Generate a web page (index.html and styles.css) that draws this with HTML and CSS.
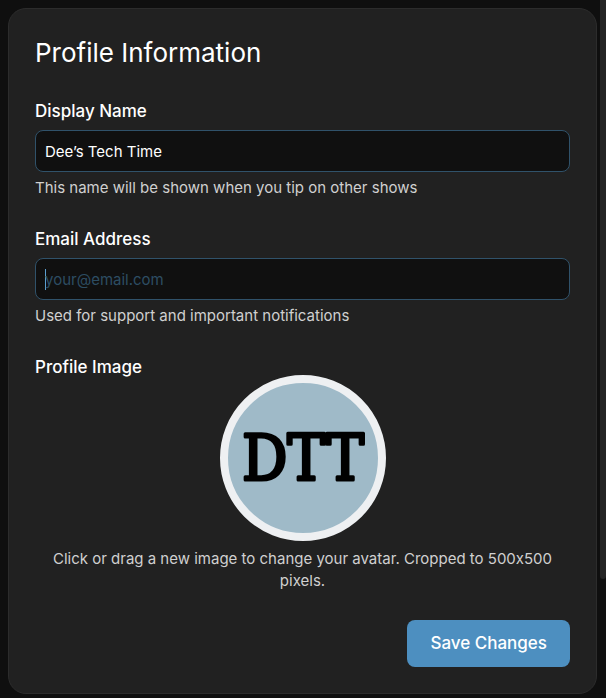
FILE: index.html
```html
<!DOCTYPE html>
<html lang="en">
<head>
<meta charset="utf-8">
<meta name="viewport" content="width=device-width, initial-scale=1">
<title>Profile Information</title>
<link rel="stylesheet" href="styles.css">
</head>
<body>

<main class="page">
  <form class="card">
    <h1 class="card-title">Profile Information</h1>

    <div class="field">
      <label class="field-label" for="displayName">Display Name</label>
      <input class="field-input" type="text" id="displayName" value="Dee’s Tech Time">
      <p class="hint">This name will be shown when you tip on other shows</p>
    </div>

    <div class="field">
      <label class="field-label" for="email">Email Address</label>
      <input class="field-input field-active" type="email" id="email" placeholder="your@email.com">
      <p class="hint">Used for support and important notifications</p>
    </div>

    <div class="field-image">
      <label class="image-label" for="avatar">Profile Image</label>
      <label class="avatar" for="avatar">
        <svg class="avatar-img" viewBox="0 0 166 166">
          <circle cx="83" cy="83" r="79" fill="#9fbac8" stroke="#eef0f2" stroke-width="8"/>
          <text class="avatar-text" x="83" y="105" text-anchor="middle">DTT</text>
        </svg>
      </label>
      <input class="file-input" type="file" id="avatar" accept="image/*">
      <p class="hint image-hint">Click or drag a new image to change your avatar. Cropped to 500x500 pixels.</p>
    </div>

    <div class="actions">
      <button class="save-btn" type="submit">Save Changes</button>
    </div>
  </form>
  <div class="scroll-track"><div class="scroll-thumb"></div></div>
</main>

</body>
</html>
```

FILE: styles.css
```css
* {
  box-sizing: border-box;
}
body {
  margin: 0;
  background-color: #0f0f0f;
  color: #fff;
  font-family: Inter, "Liberation Sans", sans-serif;
  font-feature-settings: "calt" 0;
}
.page {
  display: flex;
  gap: 3px;
  min-height: 100vh;
}
.card {
  flex: 1;
  align-self: flex-start;
  margin: 8px 0 4px 8px;
  padding: 26px;
  background-color: #212121;
  border: 1px solid #2c2c2c;
  border-radius: 18px;
}
.card-title {
  margin: 0 0 32px;
  font-size: 26px;
  font-weight: 400;
  line-height: 36px;
}

/* fields */
.field {
  margin-bottom: 32px;
}
.field-label,
.image-label {
  display: block;
  font-size: 17px;
  font-weight: 500;
  line-height: 16px;
}
.field-input {
  display: block;
  width: 100%;
  height: 42px;
  margin: 11px 0 5px;
  padding: 0 9px;
  background-color: #101010;
  border: 1px solid #30526a;
  border-radius: 8px;
  color: #fff;
  font-family: inherit;
  font-size: 15px;
  outline: none;
}
.field-input::placeholder {
  color: #2d4d63;
  opacity: 1;
}
/* caret line at the start of the empty box */
.field-active:placeholder-shown {
  background-image: linear-gradient(#5b9fd0, #5b9fd0);
  background-repeat: no-repeat;
  background-size: 1px 21px;
  background-position: 9px center;
  caret-color: transparent;
}
.hint {
  margin: 0;
  color: #d0d0d0;
  font-size: 15px;
  line-height: 22px;
}

/* avatar */
.avatar {
  display: block;
  width: 166px;
  margin: 0 auto 7px;
  border-radius: 50%;
  cursor: pointer;
}
.avatar-img {
  display: block;
  width: 100%;
}
.avatar-text {
  font-family: "DejaVu Serif Condensed", "DejaVu Serif", serif;
  font-size: 63px;
  font-weight: 400;
  stroke: #000;
  stroke-width: 3px;
  stroke-linejoin: round;
}
.file-input {
  display: none;
}
.image-hint {
  text-align: center;
}

.actions {
  display: flex;
  justify-content: flex-end;
  margin-top: 28px;
}
.save-btn {
  padding: 12px 23px;
  background-color: #4d8fc0;
  border: 0;
  border-radius: 8px;
  color: #fff;
  font-family: inherit;
  font-size: 17px;
  font-weight: 500;
  line-height: 23px;
  cursor: pointer;
}
.save-btn:hover {
  background-color: #5c9ccc;
}

.scroll-track {
  width: 6px;
  height: 100vh;
}
.scroll-thumb {
  height: 83%;
  background-color: #242424;
  border-radius: 0 0 3px 3px;
}
```
